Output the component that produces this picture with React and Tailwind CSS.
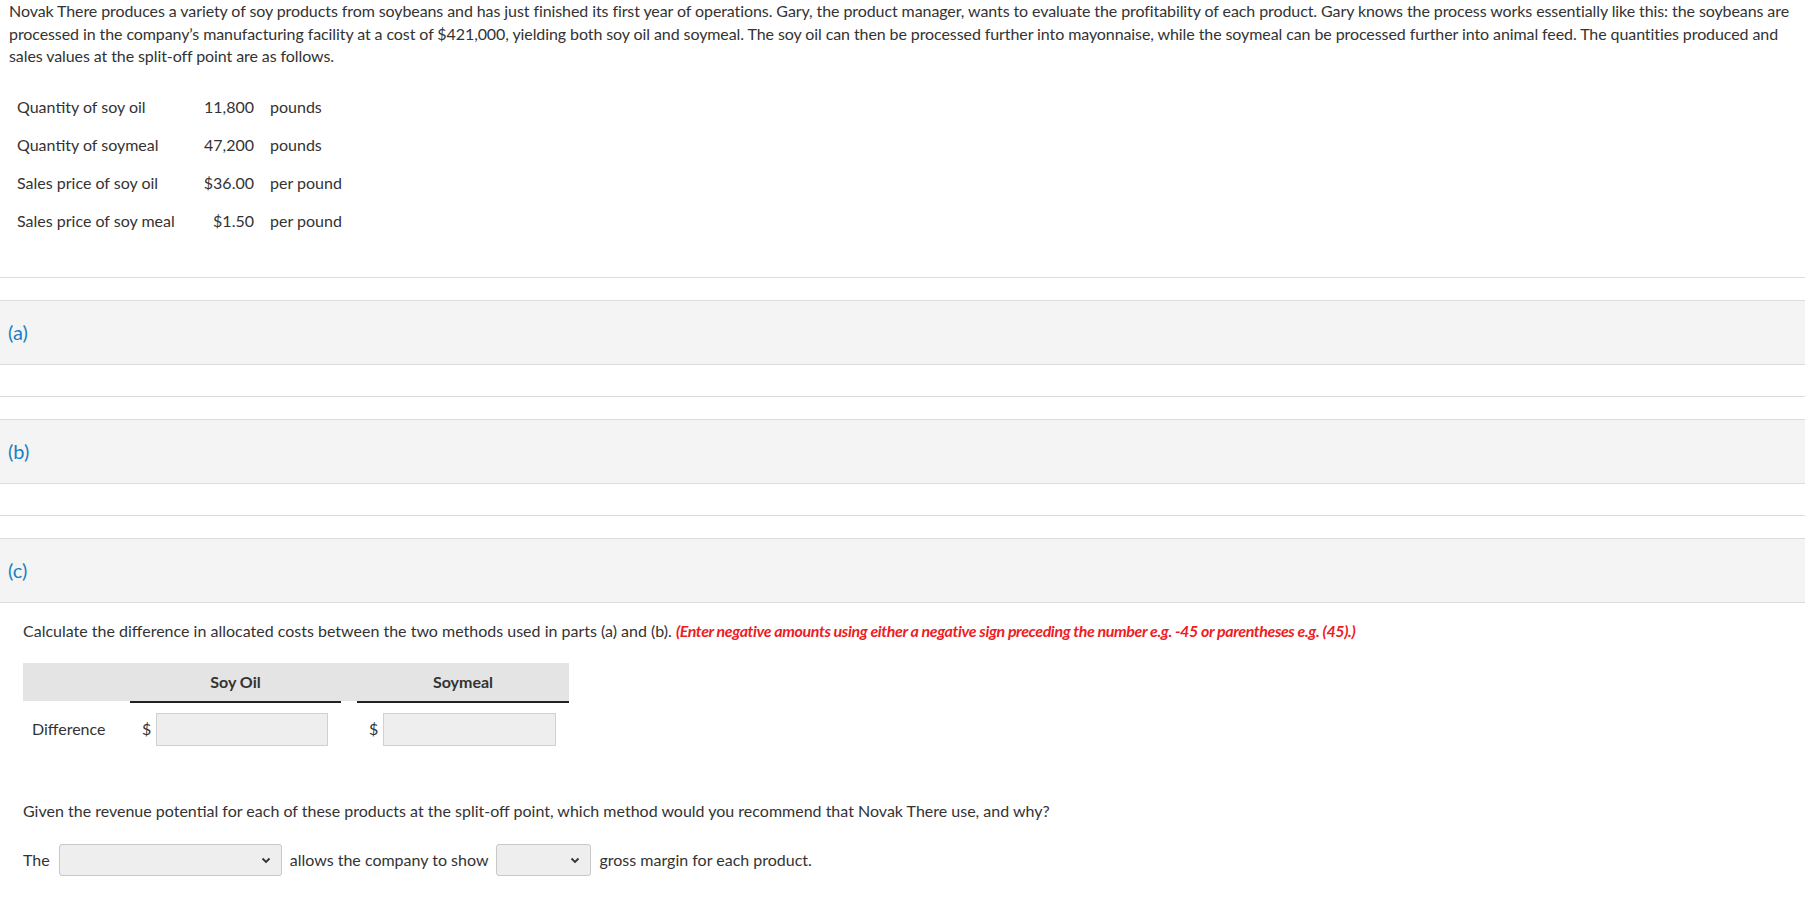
const facts = [
  { label: "Quantity of soy oil", value: "11,800", unit: "pounds" },
  { label: "Quantity of soymeal", value: "47,200", unit: "pounds" },
  { label: "Sales price of soy oil", value: "$36.00", unit: "per pound" },
  { label: "Sales price of soy meal", value: "$1.50", unit: "per pound" },
];

function Part({ letter }) {
  return (
    <div>
      <div className="border-t border-[#dcdcdc]" />
      <div className="mt-[22px] h-[65px] bg-[#f4f4f4] border-y border-[#dcdcdc] flex items-center px-[8px]">
        <span className="text-[20px] text-[#1a7fc3]">({letter})</span>
      </div>
    </div>
  );
}

function Select({ width }) {
  return (
    <div
      className={`relative h-[32px] bg-[#eeeeee] border border-[#c8c8c8] rounded-[3px] ${width}`}
    >
      <svg
        width="10"
        height="7"
        viewBox="0 0 10 7"
        className="absolute right-[10px] top-[12px]"
      >
        <polyline points="1.5,1.5 5,5 8.5,1.5" fill="none" stroke="#333" strokeWidth="1.8" />
      </svg>
    </div>
  );
}

export default function App() {
  return (
    <div className="min-h-screen bg-white text-[#333] font-['Lato','Open_Sans',sans-serif] text-[16px]">
      <p className="pl-[9px] pr-[4px] leading-[22.5px] tracking-[-0.09px]">
        Novak There produces a variety of soy products from soybeans and has just finished its first year of operations.
        Gary, the product manager, wants to evaluate the profitability of each product. Gary knows the process works
        essentially like this: the soybeans are processed in the company’s manufacturing facility at a cost of $421,000,
        yielding both soy oil and soymeal. The soy oil can then be processed further into mayonnaise, while the soymeal
        can be processed further into animal feed. The quantities produced and sales values at the split-off point are
        as follows.
      </p>

      <div className="mt-[28px] pl-[17px] flex flex-col gap-[16px]">
        {facts.map((f) => (
          <div key={f.label} className="flex items-center h-[22px]">
            <span className="w-[172px]">{f.label}</span>
            <span className="w-[65px] text-right">{f.value}</span>
            <span className="ml-[16px]">{f.unit}</span>
          </div>
        ))}
      </div>

      <div className="mt-[45px]">
        <Part letter="a" />
        <div className="h-[31px]" />
        <Part letter="b" />
        <div className="h-[31px]" />
        <Part letter="c" />
      </div>

      <div className="px-[23px]">
        <p className="mt-[17px] leading-[22px]">
          Calculate the difference in allocated costs between the two methods used in parts (a) and (b).{" "}
          <span className="text-[#ee1c24] font-bold italic tracking-[-0.4px]">
            (Enter negative amounts using either a negative sign preceding the number e.g. -45 or parentheses e.g. (45).)
          </span>
        </p>

        <div className="mt-[21px] w-[546px]">
          <div className="h-[38px] bg-[#e4e4e4] grid grid-cols-[107px_227px_212px] items-center font-bold">
            <span />
            <span className="text-center pr-[16px]">Soy Oil</span>
            <span className="text-center">Soymeal</span>
          </div>
          <div className="grid grid-cols-[107px_227px_212px]">
            <span />
            <div className="border-t-2 border-[#222] mr-[16px]" />
            <div className="border-t-2 border-[#222]" />
          </div>
          <div className="mt-[10px] grid grid-cols-[107px_227px_212px] items-center">
            <span className="pl-[9px]">Difference</span>
            <div className="flex items-center">
              <span className="w-[26px] pl-[12px]">$</span>
              <div className="h-[33px] w-[172px] bg-[#eeeeee] border border-[#d0d0d0]" />
            </div>
            <div className="flex items-center">
              <span className="w-[26px] pl-[12px]">$</span>
              <div className="h-[33px] w-[173px] bg-[#eeeeee] border border-[#d0d0d0]" />
            </div>
          </div>
        </div>

        <p className="mt-[54px] leading-[22px]">
          Given the revenue potential for each of these products at the split-off point, which method would you
          recommend that Novak There use, and why?
        </p>

        <div className="mt-[22px] flex items-center gap-[8px]">
          <span className="mr-[1px]">The</span>
          <Select width="w-[223px]" />
          <span>allows the company to show</span>
          <Select width="w-[95px]" />
          <span>gross margin for each product.</span>
        </div>
      </div>
    </div>
  );
}
